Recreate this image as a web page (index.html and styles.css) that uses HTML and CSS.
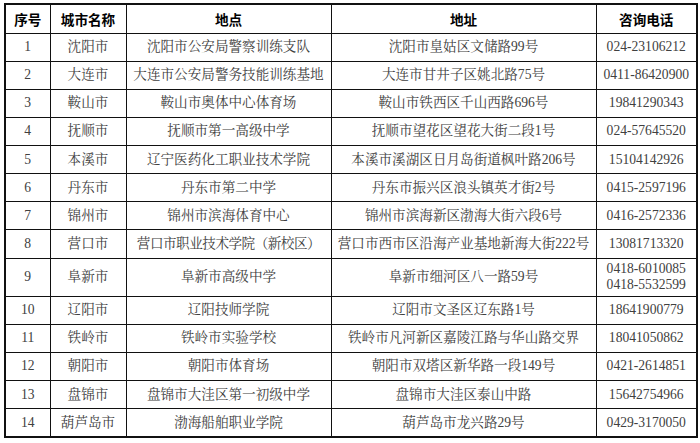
FILE: index.html
```html
<!DOCTYPE html>
<html lang="zh-CN">
<head>
<meta charset="utf-8">
<title>考点信息</title>
<link rel="stylesheet" href="styles.css">
</head>
<body>
<table class="sites">
  <colgroup>
    <col class="c-no"><col class="c-city"><col class="c-place"><col class="c-addr"><col class="c-tel">
  </colgroup>
  <thead>
    <tr class="head"><th>序号</th><th>城市名称</th><th>地点</th><th>地址</th><th>咨询电话</th></tr>
  </thead>
  <tbody>
    <tr><td>1</td><td>沈阳市</td><td>沈阳市公安局警察训练支队</td><td>沈阳市皇姑区文储路99号</td><td>024-23106212</td></tr>
    <tr><td>2</td><td>大连市</td><td>大连市公安局警务技能训练基地</td><td>大连市甘井子区姚北路75号</td><td>0411-86420900</td></tr>
    <tr><td>3</td><td>鞍山市</td><td>鞍山市奥体中心体育场</td><td>鞍山市铁西区千山西路696号</td><td>19841290343</td></tr>
    <tr><td>4</td><td>抚顺市</td><td>抚顺市第一高级中学</td><td>抚顺市望花区望花大街二段1号</td><td>024-57645520</td></tr>
    <tr><td>5</td><td>本溪市</td><td>辽宁医药化工职业技术学院</td><td>本溪市溪湖区日月岛街道枫叶路206号</td><td>15104142926</td></tr>
    <tr><td>6</td><td>丹东市</td><td>丹东市第二中学</td><td>丹东市振兴区浪头镇英才街2号</td><td>0415-2597196</td></tr>
    <tr><td>7</td><td>锦州市</td><td>锦州市滨海体育中心</td><td>锦州市滨海新区渤海大街六段6号</td><td>0416-2572336</td></tr>
    <tr><td>8</td><td>营口市</td><td class="tight">营口市职业技术学院（新校区）</td><td>营口市西市区沿海产业基地新海大街222号</td><td>13081713320</td></tr>
    <tr class="tall"><td>9</td><td>阜新市</td><td>阜新市高级中学</td><td>阜新市细河区八一路59号</td><td class="two">0418-6010085<br>0418-5532599</td></tr>
    <tr><td>10</td><td>辽阳市</td><td>辽阳技师学院</td><td>辽阳市文圣区辽东路1号</td><td>18641900779</td></tr>
    <tr><td>11</td><td>铁岭市</td><td>铁岭市实验学校</td><td>铁岭市凡河新区嘉陵江路与华山路交界</td><td>18041050862</td></tr>
    <tr><td>12</td><td>朝阳市</td><td>朝阳市体育场</td><td>朝阳市双塔区新华路一段149号</td><td>0421-2614851</td></tr>
    <tr><td>13</td><td>盘锦市</td><td>盘锦市大洼区第一初级中学</td><td>盘锦市大洼区泰山中路</td><td>15642754966</td></tr>
    <tr><td>14</td><td>葫芦岛市</td><td>渤海船舶职业学院</td><td>葫芦岛市龙兴路29号</td><td>0429-3170050</td></tr>
  </tbody>
</table>
</body>
</html>
```

FILE: styles.css
```css
html, body {
  margin: 0;
  padding: 0;
  background: #ffffff;
}

body {
  padding: 3px 0 0 4px;
}

.sites {
  border-collapse: collapse;
  table-layout: fixed;
  width: 692px;
  font-family: "Liberation Serif", "Noto Serif CJK SC", "Noto Sans CJK SC", serif;
  font-size: 13.6px;
  color: #404040;
  border: 2px solid #111;
}

.c-no { width: 45px; }
.c-city { width: 76px; }
.c-place { width: 205px; }
.c-addr { width: 265px; }
.c-tel { width: 101px; }

.sites th,
.sites td {
  border: 1.5px solid #111;
  padding: 0;
  text-align: center;
  vertical-align: middle;
  white-space: nowrap;
  line-height: 16px;
}

.sites th {
  font-family: "Noto Sans CJK SC", sans-serif;
  font-weight: 700;
  color: #000;
  font-size: 13.6px;
}

.head { height: 29px; }
.sites tbody tr { height: 28.15px; }
.sites tbody tr.tall { height: 38px; }

.tight { letter-spacing: -0.5px; }

.two { line-height: 17px; }
```
